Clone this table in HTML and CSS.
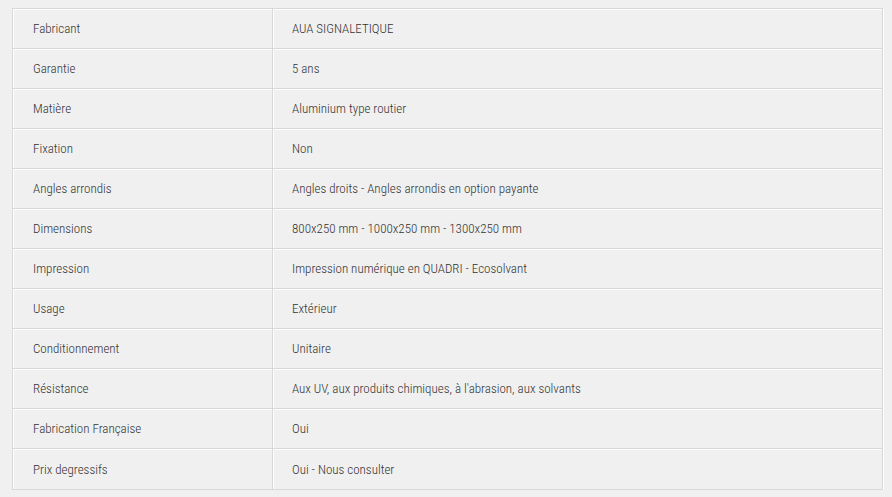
FILE: index.html
```html
<!DOCTYPE html>
<html lang="fr">
<head>
<meta charset="utf-8">
<title>Caractéristiques</title>
<link rel="stylesheet" href="styles.css">
</head>
<body>
<div class="specs">
  <div class="row"><div class="label">Fabricant</div><div class="value">AUA SIGNALETIQUE</div></div>
  <div class="row"><div class="label">Garantie</div><div class="value">5 ans</div></div>
  <div class="row"><div class="label">Matière</div><div class="value">Aluminium type routier</div></div>
  <div class="row"><div class="label">Fixation</div><div class="value">Non</div></div>
  <div class="row"><div class="label">Angles arrondis</div><div class="value">Angles droits - Angles arrondis en option payante</div></div>
  <div class="row"><div class="label">Dimensions</div><div class="value">800x250 mm - 1000x250 mm - 1300x250 mm</div></div>
  <div class="row"><div class="label">Impression</div><div class="value">Impression numérique en QUADRI - Ecosolvant</div></div>
  <div class="row"><div class="label">Usage</div><div class="value">Extérieur</div></div>
  <div class="row"><div class="label">Conditionnement</div><div class="value">Unitaire</div></div>
  <div class="row"><div class="label">Résistance</div><div class="value">Aux UV, aux produits chimiques, à l'abrasion, aux solvants</div></div>
  <div class="row"><div class="label">Fabrication Française</div><div class="value">Oui</div></div>
  <div class="row"><div class="label">Prix degressifs</div><div class="value">Oui - Nous consulter</div></div>
</div>
</body>
</html>
```
FILE: styles.css
```css
*, *::before, *::after {
  box-sizing: border-box;
}
html, body {
  margin: 0;
  padding: 0;
  background: #f0f0f0;
}
body {
  padding: 8px 9px 0 12px;
  font-family: "Roboto Condensed", "Liberation Sans Narrow", "Arial Narrow", "Liberation Sans", sans-serif;
  font-stretch: condensed;
  font-weight: 300;
  font-size: 13px;
  color: #333;
}
.specs {
  border: 1px solid #d8d8d8;
  box-shadow: inset 1px 1px 0 #fff, 1px 1px 0 #fff;
  background: #f0f0f0;
}
.row {
  display: grid;
  grid-template-columns: 260px 1fr;
  height: 40px;
  border-bottom: 1px solid #d8d8d8;
  box-shadow: 0 1px 0 #fff;
}
.row:last-child {
  border-bottom: none;
  box-shadow: none;
}
.label, .value {
  display: flex;
  align-items: center;
  padding-left: 20px;
}
.label {
  border-right: 1px solid #d8d8d8;
  box-shadow: 1px 0 0 #fff;
}
.value {
  padding-left: 19px;
}
```
